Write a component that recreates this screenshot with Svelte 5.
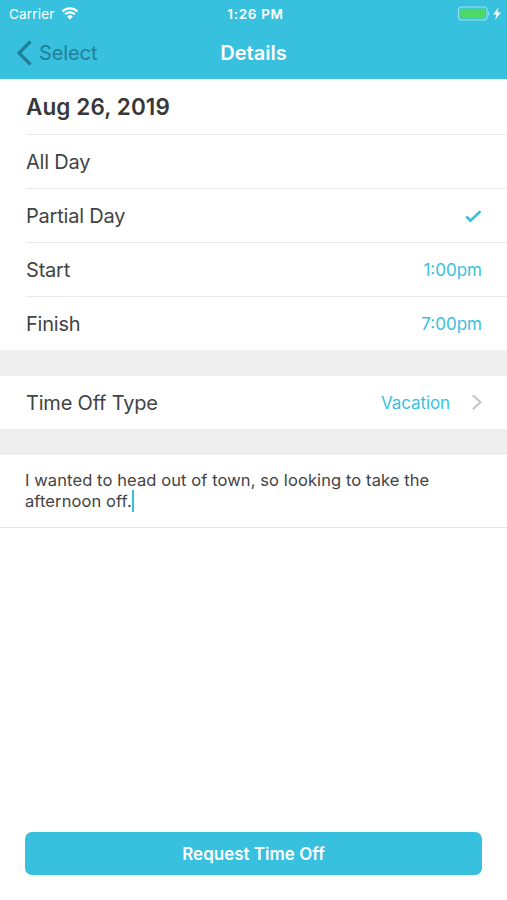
<script lang="ts">
	let is_partial = true;
	let times = [
		{ label: "Start", value: "1:00pm" },
		{ label: "Finish", value: "7:00pm" },
	];
	let type = "Vacation";
	let note = "I wanted to head out of town, so looking to take the afternoon off.";
</script>

<div class="screen">
	<header>
		<div class="status">
			<div class="carrier">
				<span>Carrier</span>
				<svg width="18" height="13" viewBox="0 0 18 13">
					<path d="M1.4 4.4a11 11 0 0 1 15.2 0M4.1 7.3a7.1 7.1 0 0 1 9.8 0" fill="none" stroke="#fff" stroke-width="2.1" />
					<path d="M9 12.5 6.1 9.5a4.2 4.2 0 0 1 5.8 0z" fill="#fff" />
				</svg>
			</div>
			<span class="clock">1:26 PM</span>
			<div class="battery">
				<svg width="44" height="16" viewBox="0 0 44 16">
					<rect x="0.6" y="1" width="28.4" height="13" rx="3" fill="none" stroke="#9be1f0" stroke-width="1.1" />
					<rect x="2.4" y="2.8" width="24.8" height="9.4" rx="1" fill="#4cd964" />
					<path d="M30.4 5.3c1.6.6 1.6 3.8 0 4.4z" fill="#9be1f0" />
					<path d="M40.6 1.2 35.1 8.6h3.5l-1.6 5.4 5.9-7.6h-3.6z" fill="#fff" />
				</svg>
			</div>
		</div>
		<nav>
			<button class="back">
				<svg width="17" height="26" viewBox="0 0 17 26">
					<path d="M14.5 1.5 3 13l11.5 11.5" fill="none" stroke="currentColor" stroke-width="3.2" />
				</svg>
				<span>Select</span>
			</button>
			<h1>Details</h1>
		</nav>
	</header>

	<section class="group">
		<div class="row date"><span>Aug 26, 2019</span></div>
		<div class="row" on:click={() => (is_partial = false)} role="presentation">
			<span>All Day</span>
			{#if !is_partial}
				<svg class="check" width="17" height="13" viewBox="0 0 17 13"><path d="m1.3 6.5 4.1 4.2L15.5 1.3" /></svg>
			{/if}
		</div>
		<div class="row" on:click={() => (is_partial = true)} role="presentation">
			<span>Partial Day</span>
			{#if is_partial}
				<svg class="check" width="17" height="13" viewBox="0 0 17 13"><path d="m1.3 6.5 4.1 4.2L15.5 1.3" /></svg>
			{/if}
		</div>
		{#if is_partial}
			{#each times as time}
				<div class="row">
					<span>{time.label}</span>
					<span class="value">{time.value}</span>
				</div>
			{/each}
		{/if}
	</section>

	<section class="group type">
		<div class="row">
			<span class="name">Time Off Type</span>
			<span class="value vacation">{type}</span>
			<svg width="11" height="17" viewBox="0 0 11 17">
				<path d="M1.8 1.2 9.5 8.2 1.8 15.2" fill="none" stroke="#c4c4c6" stroke-width="2" />
			</svg>
		</div>
	</section>

	<section class="note">
		<p>{note}<span class="caret"></span></p>
	</section>

	<footer>
		<button class="submit">Request Time Off</button>
	</footer>
</div>

<style>
	:global(body) {
		background: #fff;
	}

	.screen {
		display: flex;
		flex-direction: column;
		height: 900px;
		font-family: Inter, "Liberation Sans", sans-serif;
		color: #434345;
	}

	header {
		height: 79px;
		background: #38c1df;
		color: #fff;
	}

	svg {
		display: block;
		flex: none;
	}

	button {
		border: none;
		font-family: inherit;
		cursor: pointer;
	}

	.status {
		display: grid;
		grid-template-columns: 1fr auto 1fr;
		align-items: center;
		height: 27px;
		padding: 0 5px 0 9px;
		font-size: 13.5px;
	}

	.carrier {
		display: flex;
		align-items: center;
		gap: 6px;
		letter-spacing: 0.2px;
	}

	.clock {
		font-weight: 600;
		letter-spacing: 0.7px;
	}

	.battery {
		display: flex;
		justify-content: flex-end;
	}

	nav {
		display: grid;
		grid-template-columns: 1fr auto 1fr;
		align-items: center;
		height: 51px;
		padding: 0 16px;
	}

	.back {
		display: flex;
		align-items: center;
		gap: 6px;
		padding: 0;
		background: none;
		color: #217f98;
		font-size: 20px;
		letter-spacing: -0.1px;
	}

	h1 {
		margin: 0;
		font-size: 20px;
		font-weight: 600;
		letter-spacing: 0;
	}

	.group {
		padding-left: 26px;
		border-bottom: 26px solid #efeff0;
	}

	.row {
		display: flex;
		align-items: center;
		justify-content: space-between;
		box-sizing: border-box;
		height: 54px;
		padding-right: 25px;
		border-bottom: 1px solid #e9e9eb;
		font-size: 20px;
		letter-spacing: -0.2px;
	}

	.row:last-child {
		height: 53px;
		border-bottom: none;
	}

	.row.date {
		height: 56px;
		font-size: 22.5px;
		font-weight: 600;
		letter-spacing: 0.1px;
		color: #38383a;
	}

	.name {
		flex: 1;
	}

	.value {
		color: #38c1df;
		font-size: 17px;
		letter-spacing: 0;
	}

	.vacation {
		margin-right: 21px;
		letter-spacing: -0.1px;
	}

	.check {
		margin-top: 1px;
	}

	.check path {
		fill: none;
		stroke: #38c1df;
		stroke-width: 2.6;
	}

	.note {
		box-sizing: border-box;
		height: 73px;
		padding: 15px 60px 0 25px;
		border-bottom: 1px solid #e4e4e6;
	}

	.note p {
		margin: 0;
		font-size: 16.5px;
		line-height: 21px;
		letter-spacing: 0.1px;
	}

	.caret {
		display: inline-block;
		width: 2px;
		height: 22px;
		margin: -5px 0 -1px;
		vertical-align: middle;
		background: #38c1df;
	}

	footer {
		margin-top: auto;
		padding: 0 25px 25px;
	}

	.submit {
		display: block;
		width: 100%;
		height: 43px;
		border-radius: 7px;
		background: #38c1df;
		color: #fff;
		font-size: 17px;
		font-weight: 600;
	}
</style>
